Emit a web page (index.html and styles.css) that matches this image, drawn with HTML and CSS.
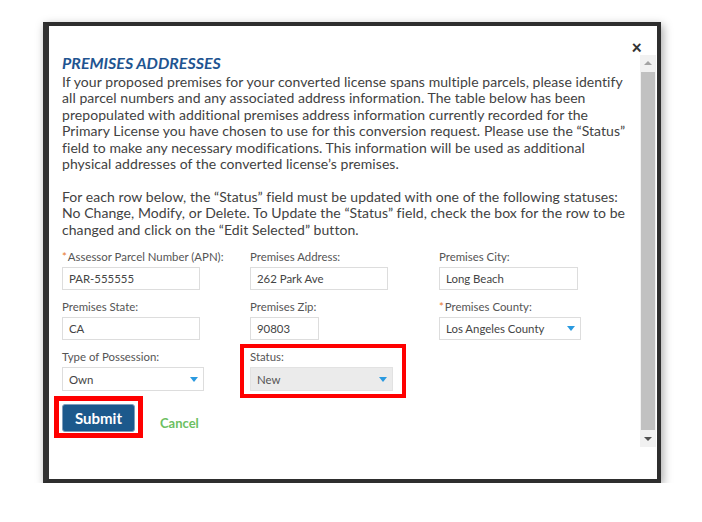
FILE: index.html
```html
<!DOCTYPE html>
<html lang="en">
<head>
<meta charset="utf-8">
<title>Premises Addresses</title>
<link rel="stylesheet" href="styles.css">
</head>
<body>
<div class="frame">
  <div class="modal">
    <div class="modal-head"><span class="close">×</span></div>
    <div class="modal-main">
      <div class="content">
        <h2 class="title">PREMISES ADDRESSES</h2>
        <p class="intro">If your proposed premises for your converted license spans multiple parcels, please identify<br>all parcel numbers and any associated address information. The table below has been<br>prepopulated with additional premises address information currently recorded for the<br>Primary License you have chosen to use for this conversion request. Please use the “Status”<br>field to make any necessary modifications. This information will be used as additional<br>physical addresses of the converted license’s premises.</p>
        <p class="intro gap">For each row below, the “Status” field must be updated with one of the following statuses:<br>No Change, Modify, or Delete. To Update the “Status” field, check the box for the row to be<br>changed and click on the “Edit Selected” button.</p>
        <div class="form">
          <div class="field">
            <label class="label"><span class="req">*</span>Assessor Parcel Number (APN):</label>
            <div class="input w138">PAR-555555</div>
          </div>
          <div class="field">
            <label class="label">Premises Address:</label>
            <div class="input w138">262 Park Ave</div>
          </div>
          <div class="field">
            <label class="label">Premises City:</label>
            <div class="input w139">Long Beach</div>
          </div>
          <div class="field">
            <label class="label">Premises State:</label>
            <div class="input w138">CA</div>
          </div>
          <div class="field">
            <label class="label">Premises Zip:</label>
            <div class="input w69">90803</div>
          </div>
          <div class="field">
            <label class="label"><span class="req">*</span>Premises County:</label>
            <div class="select w142"><span>Los Angeles County</span><i class="caret"></i></div>
          </div>
          <div class="field">
            <label class="label">Type of Possession:</label>
            <div class="select w142"><span>Own</span><i class="caret"></i></div>
          </div>
          <div class="field highlight">
            <label class="label">Status:</label>
            <div class="select w143 disabled"><span>New</span><i class="caret"></i></div>
          </div>
        </div>
        <div class="actions">
          <button class="submit">Submit</button>
          <a class="cancel">Cancel</a>
        </div>
      </div>
      <div class="scrollbar">
        <div class="sb-btn"><i class="arrow-up"></i></div>
        <div class="sb-thumb"></div>
        <div class="sb-btn"><i class="arrow-down"></i></div>
      </div>
    </div>
  </div>
</div>
</body>
</html>
```
FILE: styles.css
```css
html, body {
  margin: 0;
  padding: 0;
  background: #ffffff;
}

body {
  font-family: Lato, "Liberation Sans", sans-serif;
  color: #404040;
}

.frame {
  margin: 22px 0 0 43px;
  width: 608px;
  height: 453px;
  border: 4px solid #2e2e2e;
  border-left: 6px solid #333333;
  background: #ffffff;
  box-shadow: 2px 3px 9px rgba(0, 0, 0, 0.35);
}

.modal {
  display: flex;
  flex-direction: column;
  height: 100%;
}

.modal-head {
  height: 29px;
  box-sizing: border-box;
  padding: 14px 15px 0 0;
  display: flex;
  justify-content: flex-end;
  align-items: flex-start;
}

.close {
  font-size: 18px;
  line-height: 14px;
  font-weight: 900;
  color: #333333;
}

.modal-main {
  display: flex;
  height: 392px;
}

.content {
  flex: 1;
  padding-left: 13px;
  position: relative;
}

.title {
  margin: 0;
  font-size: 16px;
  line-height: 16px;
  font-weight: 700;
  font-style: italic;
  color: #1f5591;
}

.intro {
  margin: 3px 0 0;
  font-size: 14px;
  line-height: 16.4px;
  letter-spacing: 0.06px;
  color: #424242;
  white-space: nowrap;
}

.intro.gap {
  margin-top: 16.4px;
}

.form {
  margin-top: 11px;
  display: grid;
  grid-template-columns: 188px 189px 189px;
}

.field {
  position: relative;
  margin-bottom: 9px;
}

.field:nth-last-child(-n+2) {
  margin-bottom: 0;
}

.label {
  display: block;
  font-size: 11.4px;
  line-height: 16px;
  color: #555555;
  margin-bottom: 2px;
}

.req {
  color: #e8792b;
  margin-right: 1px;
}

.input,
.select {
  box-sizing: border-box;
  height: 23px;
  border: 1px solid #dddddd;
  background: #ffffff;
  font-size: 11.4px;
  color: #444444;
  padding: 0 6px;
  display: flex;
  align-items: center;
}

.select {
  justify-content: space-between;
  padding-right: 5px;
}

.field:nth-child(n+7) .select {
  height: 24px;
}

.select.disabled {
  background: #ebebeb;
  border-color: #e2e2e2;
  color: #555555;
}

.caret {
  width: 0;
  height: 0;
  border-left: 4.5px solid transparent;
  border-right: 4.5px solid transparent;
  border-top: 5px solid #2a9ae0;
}

.w138 { width: 138px; }
.w139 { width: 139px; }
.w69 { width: 69px; }
.w142 { width: 142px; }
.w143 { width: 143px; }

.highlight::after {
  content: "";
  position: absolute;
  left: -10px;
  top: -5px;
  width: 166px;
  height: 54px;
  box-sizing: border-box;
  border: 4px solid #ff0000;
}

.actions {
  margin-top: 13px;
  display: flex;
  align-items: flex-start;
}

.submit {
  position: relative;
  width: 73px;
  height: 28px;
  box-sizing: border-box;
  border: 1px solid #7f9fbd;
  border-radius: 3px;
  background: #1c598c;
  color: #ffffff;
  font-family: Lato, "Liberation Sans", sans-serif;
  font-size: 15px;
  font-weight: 700;
  padding: 0;
}

.submit::after {
  content: "";
  position: absolute;
  left: -9px;
  top: -9px;
  right: -9px;
  bottom: -7px;
  border: 5px solid #ff0000;
}

.cancel {
  margin: 11px 0 0 25px;
  font-size: 13px;
  line-height: 16px;
  font-weight: 700;
  color: #6cbf62;
}

.scrollbar {
  width: 16px;
  margin-right: 1px;
  background: #f1f1f1;
  display: flex;
  flex-direction: column;
}

.sb-btn {
  height: 16px;
  display: flex;
  align-items: center;
  justify-content: center;
}

.sb-thumb {
  flex: 1;
  margin: 1px;
  background: #c1c1c1;
}

.arrow-up {
  width: 0;
  height: 0;
  border-left: 4px solid transparent;
  border-right: 4px solid transparent;
  border-bottom: 4px solid #a3a3a3;
}

.arrow-down {
  width: 0;
  height: 0;
  border-left: 4px solid transparent;
  border-right: 4px solid transparent;
  border-top: 4px solid #505050;
}
```
